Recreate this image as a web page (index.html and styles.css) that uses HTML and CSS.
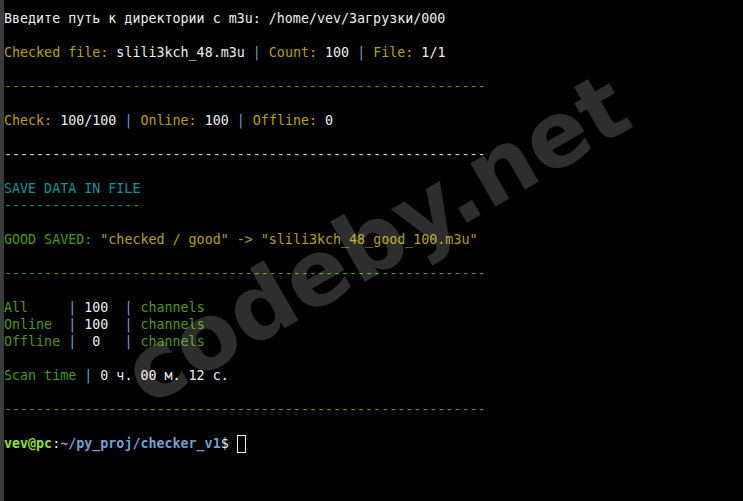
FILE: index.html
```html
<!DOCTYPE html>
<html lang="ru">
<head>
<meta charset="utf-8">
<title>terminal</title>
<link rel="stylesheet" href="styles.css">
</head>
<body>
<div class="term">
<div class="strip"></div>
<div class="screen">
<div class="line w">Введите путь к директории с m3u: /home/vev/Загрузки/000</div>
<div class="line"> </div>
<div class="line"><span class="y">Checked file:</span> <span class="w">slili3kch_48.m3u</span> <span class="b">|</span> <span class="y">Count:</span> <span class="w">100</span> <span class="b">|</span> <span class="y">File:</span> <span class="w">1/1</span></div>
<div class="line"> </div>
<div class="line g">------------------------------------------------------------</div>
<div class="line"> </div>
<div class="line"><span class="y">Check:</span> <span class="w">100/100</span> <span class="b">|</span> <span class="y">Online:</span> <span class="w">100</span> <span class="b">|</span> <span class="y">Offline:</span> <span class="w">0</span></div>
<div class="line"> </div>
<div class="line wd">------------------------------------------------------------</div>
<div class="line"> </div>
<div class="line c">SAVE DATA IN FILE</div>
<div class="line c">-----------------</div>
<div class="line"> </div>
<div class="line"><span class="g">GOOD SAVED:</span> <span class="y">"checked / good" -&gt; "slili3kch_48_good_100.m3u"</span></div>
<div class="line"> </div>
<div class="line g">------------------------------------------------------------</div>
<div class="line"> </div>
<div class="line"><span class="g">All     </span><span class="b">|</span> <span class="w">100</span>  <span class="b">|</span> <span class="g">channels</span></div>
<div class="line"><span class="g">Online  </span><span class="b">|</span> <span class="w">100</span>  <span class="b">|</span> <span class="g">channels</span></div>
<div class="line"><span class="g">Offline </span><span class="b">|</span>  <span class="w">0</span>   <span class="b">|</span> <span class="g">channels</span></div>
<div class="line"> </div>
<div class="line"><span class="g">Scan time </span><span class="b">|</span> <span class="w">0 ч. 00 м. 12 с.</span></div>
<div class="line"> </div>
<div class="line g">------------------------------------------------------------</div>
<div class="line"> </div>
<div class="line"><span class="pu">vev@pc</span><span class="w">:</span><span class="pp">~/py_proj/checker_v1</span><span class="w">$ </span><span class="cursor"></span></div>
</div>
<div class="watermark">codeby.net</div>
</div>
</body>
</html>
```
FILE: styles.css
```css
html, body {
  margin: 0;
  padding: 0;
  background: #000;
}
.term {
  position: relative;
  width: 743px;
  height: 501px;
  overflow: hidden;
  display: flex;
  background: #000;
}
.strip {
  width: 4px;
  flex: 0 0 4px;
  background: #3c3c3c;
}
.screen {
  padding-top: 9.5px;
  font-family: "DejaVu Sans Mono", monospace;
  font-size: 13.33px;
  line-height: 17px;
  color: #eeeeec;
}
.line {
  white-space: pre;
  height: 17px;
}
.w { color: #eeeeec; }
.wd { color: #d3d7cf; }
.y { color: #b8a000; }
.g { color: #4e9a06; }
.c { color: #06989a; }
.b { color: #729fcf; }
.pu { color: #8ae234; font-weight: bold; }
.pp { color: #729fcf; font-weight: bold; }
.cursor {
  display: inline-block;
  width: 9px;
  height: 18px;
  box-sizing: border-box;
  border: 1.5px solid #eeeeec;
  vertical-align: -5px;
}
.watermark {
  position: absolute;
  left: 376px;
  top: 239px;
  transform: translate(-50%, -50%) rotate(-30deg);
  font-family: "DejaVu Sans", sans-serif;
  font-weight: bold;
  font-size: 91px;
  line-height: 1;
  color: rgba(255, 255, 255, 0.18);
  white-space: nowrap;
  pointer-events: none;
}
```
